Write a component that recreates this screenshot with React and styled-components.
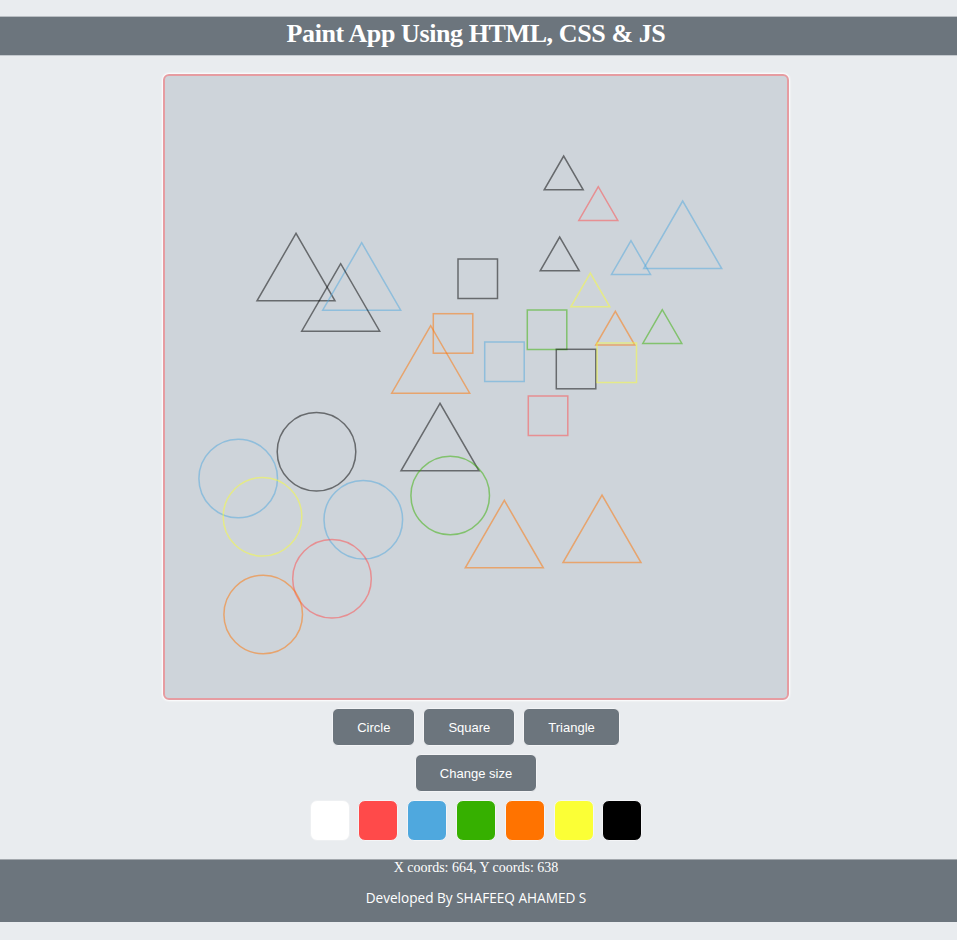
import React from 'react';
import styled, { createGlobalStyle } from 'styled-components';

const GlobalStyle = createGlobalStyle`
  body {
    margin: 0;
    background-color: #e9ecef;
    font-family: "Liberation Serif", serif;
  }
`;

const Header = styled.header`
  margin-top: 16px;
  background-color: #6c757d;
  border-top: 1px solid #b9bec3;
  border-bottom: 1px solid #c4c9ce;
  padding-right: 5px;
`;

const Title = styled.h1`
  margin: 0;
  padding-bottom: 4px;
  line-height: 34px;
  font-size: 26px;
  letter-spacing: -0.4px;
  font-weight: bold;
  color: #fff;
  text-align: center;
`;

const Main = styled.main`
  display: flex;
  flex-direction: column;
  align-items: center;
  padding: 18px 5px 18px 0;
`;

const Board = styled.div`
  width: 622px;
  height: 622px;
  border: 2px solid #e69ca1;
  border-radius: 6px;
  background-color: #ced4da;
  box-shadow: 0 0 2px 1px #fff;
  overflow: hidden;
  svg {
    display: block;
  }
`;

const Row = styled.div`
  display: flex;
  justify-content: center;
  gap: ${p => p.$gap || 8}px;
  margin-top: ${p => p.$top}px;
`;

const Button = styled.button`
  height: 38px;
  padding: 0 24px;
  border: 1px solid #f3f4f6;
  border-radius: 6px;
  background-color: #6c757d;
  color: #fff;
  font-family: "Liberation Sans", Arial, sans-serif;
  font-size: 13px;
  cursor: pointer;
`;

const Swatch = styled.div`
  width: 40px;
  height: 41px;
  box-sizing: border-box;
  border: 1px solid ${p => (p.$color === '#ffffff' ? '#eef0f2' : '#f4f5f7')};
  border-radius: 7px;
  background-color: ${p => p.$color};
`;

const Footer = styled.footer`
  background-color: #6c757d;
  border-top: 1px solid #a3a8ad;
  padding: 0 5px 15px 0;
  color: #fff;
  text-align: center;
`;

const Coords = styled.div`
  font-family: "Liberation Serif", serif;
  font-size: 14px;
  line-height: 16px;
`;

const Credit = styled.p`
  margin: 13px 0 0;
  font-family: "Open Sans", sans-serif;
  font-size: 13.6px;
  line-height: 18px;
`;

const COLORS = {
  white: '#ffffff',
  red: '#ff4a4a',
  blue: '#4fa8de',
  green: '#36b000',
  orange: '#ff7300',
  yellow: '#fbff36',
  black: '#000000',
};

const triangles = [
  [563.7, 156, 39, 'black'],
  [598.3, 186.7, 39, 'red'],
  [682.7, 201, 78, 'blue'],
  [559.7, 237, 39, 'black'],
  [631, 240.7, 39, 'blue'],
  [590.3, 273, 39, 'yellow'],
  [615.3, 311.3, 39, 'orange'],
  [662.3, 309.7, 39, 'green'],
  [430.7, 325.7, 78, 'orange'],
  [296, 233.3, 78, 'black'],
  [361.7, 242.7, 78, 'blue'],
  [340.7, 263.7, 78, 'black'],
  [440, 403.3, 78, 'black'],
  [504.3, 500.3, 78, 'orange'],
  [602, 495, 78, 'orange'],
];

const squares = [
  [458, 259, 'black'],
  [433.3, 313.7, 'orange'],
  [527.3, 310, 'green'],
  [484.7, 342, 'blue'],
  [556.3, 349.3, 'black'],
  [597, 343, 'yellow'],
  [528.3, 396, 'red'],
];

const circles = [
  [316.5, 451.7, 'black'],
  [238.2, 478.5, 'blue'],
  [262.5, 516.7, 'yellow'],
  [363.3, 519.8, 'blue'],
  [450.2, 495.5, 'green'],
  [332, 578.7, 'red'],
  [263.2, 614.5, 'orange'],
];

function Drawing() {
  const stroke = c => ({
    fill: 'none',
    stroke: COLORS[c],
    strokeOpacity: 0.5,
    strokeWidth: 1.5,
  });
  return (
    <svg width="622" height="622" viewBox="165 76 622 622">
      {triangles.map(([x, y, s, c], i) => {
        const h = s * 0.866;
        const pts = `${x},${y} ${x - s / 2},${y + h} ${x + s / 2},${y + h}`;
        return <polygon key={'t' + i} points={pts} {...stroke(c)} />;
      })}
      {squares.map(([x, y, c], i) => (
        <rect key={'s' + i} x={x} y={y} width="39.5" height="39.5" {...stroke(c)} />
      ))}
      {circles.map(([x, y, c], i) => (
        <circle key={'c' + i} cx={x} cy={y} r="39.3" {...stroke(c)} />
      ))}
    </svg>
  );
}

export default function App() {
  return (
    <>
      <GlobalStyle />
      <Header>
        <Title>Paint App Using HTML, CSS &amp; JS</Title>
      </Header>
      <Main>
        <Board>
          <Drawing />
        </Board>
        <Row $top={8}>
          <Button>Circle</Button>
          <Button>Square</Button>
          <Button>Triangle</Button>
        </Row>
        <Row $top={8}>
          <Button>Change size</Button>
        </Row>
        <Row $top={8} $gap={8.8}>
          {Object.values(COLORS).map(c => (
            <Swatch key={c} $color={c} />
          ))}
        </Row>
      </Main>
      <Footer>
        <Coords>X coords: 664, Y coords: 638</Coords>
        <Credit>Developed By SHAFEEQ AHAMED S</Credit>
      </Footer>
    </>
  );
}
